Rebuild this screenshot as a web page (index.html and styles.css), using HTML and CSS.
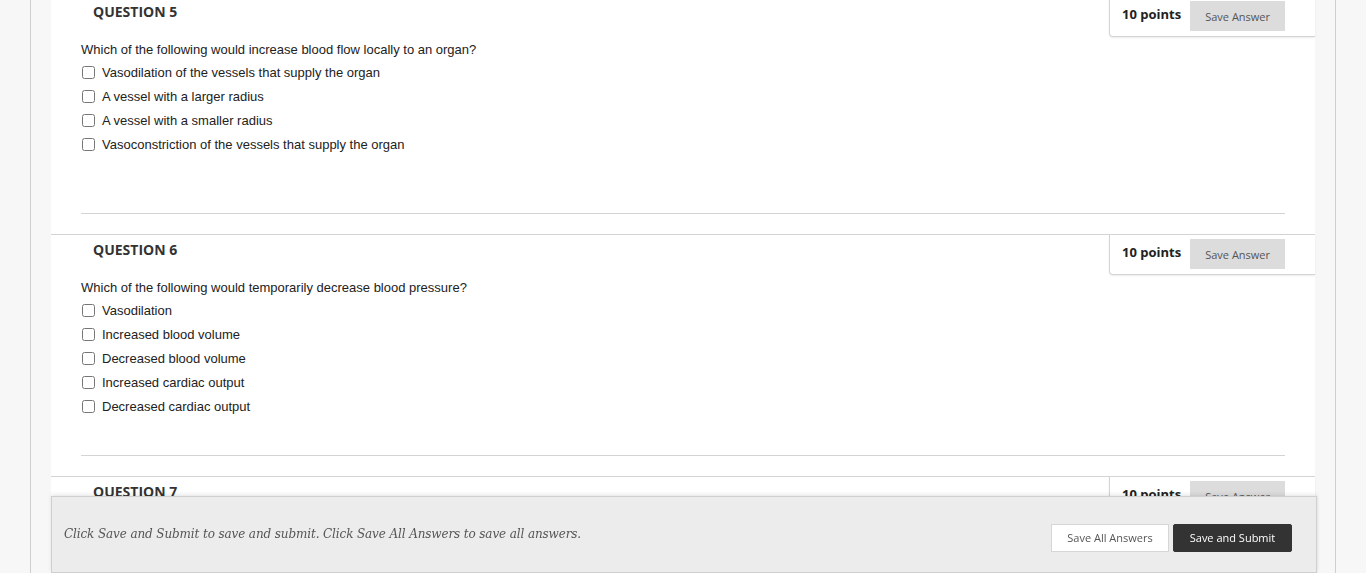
FILE: index.html
```html
<!DOCTYPE html>
<html lang="en">
<head>
  <meta charset="UTF-8" />
  <title>Take Test</title>
  <link rel="stylesheet" href="styles.css">
</head>
<body>

  <div class="page">
    <div class="panel">

      <div class="question">
        <div class="question-head">
          <h3>QUESTION 5</h3>
          <div class="points">
            <span>10 points</span>
            <button class="save-answer">Save Answer</button>
          </div>
        </div>
        <div class="question-body">
          <p class="question-text">Which of the following would increase blood flow locally to an organ?</p>
          <ul class="answers">
            <li><label><input type="checkbox"> Vasodilation of the vessels that supply the organ</label></li>
            <li><label><input type="checkbox"> A vessel with a larger radius</label></li>
            <li><label><input type="checkbox"> A vessel with a smaller radius</label></li>
            <li><label><input type="checkbox"> Vasoconstriction of the vessels that supply the organ</label></li>
          </ul>
        </div>
      </div>

      <div class="question">
        <div class="question-head">
          <h3>QUESTION 6</h3>
          <div class="points">
            <span>10 points</span>
            <button class="save-answer">Save Answer</button>
          </div>
        </div>
        <div class="question-body">
          <p class="question-text">Which of the following would temporarily decrease blood pressure?</p>
          <ul class="answers">
            <li><label><input type="checkbox"> Vasodilation</label></li>
            <li><label><input type="checkbox"> Increased blood volume</label></li>
            <li><label><input type="checkbox"> Decreased blood volume</label></li>
            <li><label><input type="checkbox"> Increased cardiac output</label></li>
            <li><label><input type="checkbox"> Decreased cardiac output</label></li>
          </ul>
        </div>
      </div>

      <div class="question">
        <div class="question-head">
          <h3>QUESTION 7</h3>
          <div class="points">
            <span>10 points</span>
            <button class="save-answer">Save Answer</button>
          </div>
        </div>
        <div class="question-body">
          <p class="question-text">&nbsp;</p>
        </div>
      </div>

    </div>
  </div>

  <div class="submit-bar">
    <p>Click Save and Submit to save and submit. Click Save All Answers to save all answers.</p>
    <div class="submit-actions">
      <button class="btn-light">Save All Answers</button>
      <button class="btn-dark">Save and Submit</button>
    </div>
  </div>

</body>
</html>
```

FILE: styles.css
```css
* {
  box-sizing: border-box;
  margin: 0;
  padding: 0;
}

body {
  background: #f7f7f7;
  font-family: 'Liberation Sans', Arial, sans-serif;
  color: #222;
  overflow: hidden;
  height: 573px;
}

.page {
  margin-left: 30px;
  width: 1306px;
  min-height: 700px;
  border-left: 1px solid #cfcfcf;
  border-right: 1px solid #cfcfcf;
  padding: 0 20px;
  background: #f7f7f7;
}

.panel {
  background: #fff;
  margin-top: -4px;
}

.question {
  border-top: 1px solid #d4d4d4;
}

.question:first-child {
  border-top-color: transparent;
}

.question-head {
  display: flex;
  justify-content: space-between;
  align-items: flex-start;
  margin-top: -1px;
}

.question-head h3 {
  font-family: 'Open Sans', sans-serif;
  font-size: 14px;
  font-weight: bold;
  color: #333;
  padding: 6px 0 0 42px;
  line-height: 20px;
}

.points {
  display: flex;
  align-items: center;
  gap: 9px;
  flex-shrink: 0;
  width: 206px;
  height: 41px;
  padding: 4px 30px 5px 12px;
  border-left: 1px solid #d4d4d4;
  border-bottom: 1px solid #d4d4d4;
  border-top: 1px solid #d4d4d4;
  border-bottom-left-radius: 4px;
  box-shadow: 0 1px 2px rgba(0, 0, 0, 0.08);
  font-family: 'Open Sans', sans-serif;
  font-size: 13px;
  font-weight: bold;
  color: #222;
  white-space: nowrap;
}

.points span {
  padding-bottom: 4px;
}

.question:first-child .points {
  border-top-color: transparent;
}

.save-answer {
  flex-shrink: 0;
  width: 95px;
  height: 30px;
  margin-left: auto;
  border: none;
  background: #dcdcdc;
  color: #555;
  font-family: 'Open Sans', sans-serif;
  font-size: 11px;
}

.question-body {
  margin: 0 30px 20px;
  border-bottom: 1px solid #d4d4d4;
}

.question-text {
  font-size: 13px;
  line-height: 16px;
  margin-top: 5px;
}

.answers {
  list-style: none;
  margin-top: 2px;
  min-height: 153px;
  padding-bottom: 37px;
}

.answers li {
  height: 24px;
  display: flex;
  align-items: center;
  font-size: 13px;
}

.answers label {
  display: flex;
  align-items: center;
}

.answers input {
  width: 13px;
  height: 13px;
  margin: 0 7px 0 1px;
}

.submit-bar {
  position: fixed;
  left: 51px;
  bottom: 0;
  width: 1266px;
  height: 77px;
  background: #ececec;
  border: 1px solid #cfcfcf;
  box-shadow: 0 -2px 4px rgba(0, 0, 0, 0.08), 1px 0 2px rgba(0, 0, 0, 0.05);
  display: flex;
  justify-content: space-between;
  align-items: center;
  padding: 0 24px 0 12px;
}

.submit-bar p {
  font-family: 'DejaVu Serif', Georgia, serif;
  font-style: italic;
  font-size: 12px;
  letter-spacing: -0.12px;
  color: #555;
  margin-top: -1px;
}

.submit-actions {
  display: flex;
  gap: 4px;
  margin-top: 6px;
}

.submit-actions button {
  height: 28px;
  font-family: 'Open Sans', sans-serif;
  font-size: 11px;
}

.btn-light {
  width: 118px;
  background: #fff;
  border: 1px solid #d6d6d6;
  color: #555;
}

.btn-dark {
  width: 119px;
  background: #333;
  border: 1px solid #333;
  border-radius: 2px;
  color: #fff;
}
```
